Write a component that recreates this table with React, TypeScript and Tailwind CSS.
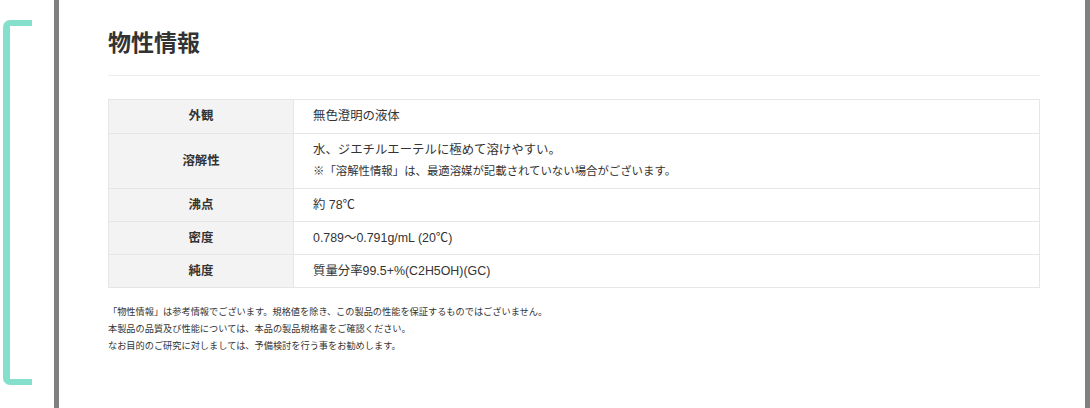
import React from "react";

const rows: { label: string; h: string; value: React.ReactNode }[] = [
  { label: "外観", h: "h-[34px]", value: "無色澄明の液体" },
  {
    label: "溶解性",
    h: "h-[55px]",
    value: (
      <div className="flex flex-col">
        <span className="leading-[21px]">水、ジエチルエーテルに極めて溶けやすい。</span>
        <span className="text-[11.4px] leading-[21px]">
          ※「溶解性情報」は、最適溶媒が記載されていない場合がございます。
        </span>
      </div>
    ),
  },
  { label: "沸点", h: "h-[33px]", value: "約 78℃" },
  { label: "密度", h: "h-[33px]", value: "0.789～0.791g/mL (20℃)" },
  { label: "純度", h: "h-[32px]", value: "質量分率99.5+%(C2H5OH)(GC)" },
];

export default function App() {
  return (
    <div
      className="flex h-[408px] w-[1090px] bg-white text-[#333333]"
      style={{ fontFamily: '"Liberation Sans", "Noto Sans CJK JP", sans-serif' }}
    >
      {/* bracket decoration */}
      <div className="w-[54px] shrink-0 pl-[3px] pt-[20px]">
        <div className="h-[365px] w-[29px] rounded-l-[7px] border-y-[6px] border-l-[7px] border-[#85dfcd]" />
      </div>
      <div className="w-[5px] shrink-0 bg-[#808080]" />

      <main className="flex-1 pl-[49px] pr-[45px] pt-[27px]">
        <h2 className="border-b border-[#ebebeb] pb-[16px] text-[23px] font-bold leading-[32px]">
          物性情報
        </h2>

        <div className="mt-[23px] border border-[#e6e6e6] text-[12.4px]">
          {rows.map((r, i) => (
            <div
              key={r.label}
              className={`flex ${r.h} ${i < rows.length - 1 ? "border-b border-[#e6e6e6]" : ""}`}
            >
              <div className="flex w-[185px] shrink-0 items-center justify-center border-r border-[#e6e6e6] bg-[#f3f3f3] font-bold">
                {r.label}
              </div>
              <div className="flex flex-1 items-center pl-[19px]">{r.value}</div>
            </div>
          ))}
        </div>

        <div className="mt-[16px] text-[9.2px] leading-[17px]">
          <p>「物性情報」は参考情報でございます。規格値を除き、この製品の性能を保証するものではございません。</p>
          <p>本製品の品質及び性能については、本品の製品規格書をご確認ください。</p>
          <p>なお目的のご研究に対しましては、予備検討を行う事をお勧めします。</p>
        </div>
      </main>

      <div className="w-[5px] shrink-0 bg-[#808080]" />
    </div>
  );
}
